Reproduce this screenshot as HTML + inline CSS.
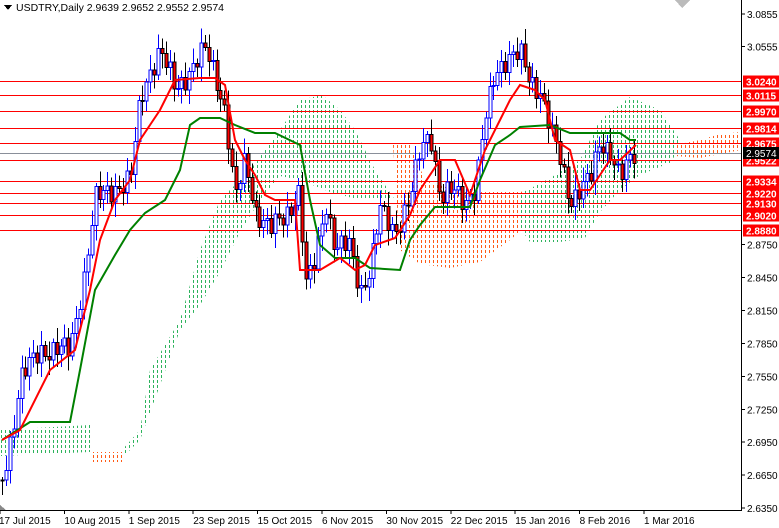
<!DOCTYPE html>
<html><head><meta charset="utf-8"><style>
html,body{margin:0;padding:0;background:#fff;width:779px;height:528px;overflow:hidden}
svg{display:block;font-family:"Liberation Sans",sans-serif}
</style></head><body>
<svg id="s" width="779" height="528" xmlns="http://www.w3.org/2000/svg" shape-rendering="crispEdges">
<defs id="defs"></defs>
<rect width="779" height="528" fill="#fff"/>
<g id="clouds"></g>
<g id="hl" stroke="#ff0000" stroke-width="1"></g>
<line x1="0" y1="153.5" x2="741" y2="153.5" stroke="#8a8f99" stroke-width="1"/>
<g id="cd"></g>
<polyline id="kj" fill="none" stroke="#008000" stroke-width="2" shape-rendering="auto"/>
<polyline id="tk" fill="none" stroke="#ff0000" stroke-width="2" shape-rendering="auto"/>
<rect x="742" y="0" width="37" height="528" fill="#fff"/>
<rect x="0" y="511" width="741" height="17" fill="#fff"/>
<line x1="741.5" y1="0" x2="741.5" y2="511" stroke="#000"/>
<line x1="0" y1="510.5" x2="742" y2="510.5" stroke="#000"/>
<g id="ax" font-size="10" fill="#000"></g>
<g id="lb"></g>
<g id="dt" font-size="10" fill="#000"></g>
<polygon points="4,5 12,5 8,10" fill="#000"/>
<text x="16" y="11" font-size="10.5" fill="#000">USDTRY,Daily  2.9639 2.9652 2.9552 2.9574</text>
<polygon points="0,505 6,510 0,510" fill="#888"/>
<polygon points="675,0 690,0 682,8" fill="#bbb"/>
</svg>
<script>
var N="http://www.w3.org/2000/svg";
function el(p,t,a,txt){var e=document.createElementNS(N,t);for(var k in a)e.setAttribute(k,a[k]);if(txt)e.textContent=txt;document.getElementById(p).appendChild(e);return e;}
function Y(p){return 508-(p-2.635)*1097;}
var clouds=[
["#2db35c","0,430 90,425 90,452 0,456"],
["#ff5a14","90,452 122,452 122,462 90,462"],
["#2db35c","122,450 140,430 150,370 180,320 200,250 220,200 250,170 280,130 300,100 322,95 340,110 355,130 375,170 395,200 360,200 330,192 300,180 280,176 260,200 240,232 220,272 200,305 180,330 160,385 140,440 125,455"],
["#ff5a14","393,145 410,145 425,180 460,192 490,192 520,192 540,188 540,215 510,240 480,262 450,268 420,264 400,250"],
["#2db35c","518,195 550,178 580,160 600,120 630,97 660,110 680,140 672,162 640,175 620,190 600,212 585,238 560,242 530,242 518,225"],
["#ff5a14","675,145 700,140 720,134 741,132 741,150 700,158 675,156"]];
clouds.forEach(function(c,i){
 var cp=el("defs","clipPath",{id:"c"+i});var pg=document.createElementNS(N,"polygon");pg.setAttribute("points",c[1]);cp.appendChild(pg);
 var g=el("clouds","g",{"clip-path":"url(#c"+i+")",stroke:c[0],"stroke-width":1,"stroke-dasharray":"3 2"});
 for(var x=1.5;x<742;x+=4){var l=document.createElementNS(N,"line");l.setAttribute("x1",x);l.setAttribute("x2",x);l.setAttribute("y1",0);l.setAttribute("y2",510);g.appendChild(l);}
});
var hl=[3.0240,3.0115,2.9970,2.9814,2.9675,2.9522,2.9334,2.9220,2.9130,2.9020,2.8880];
hl.forEach(function(p){var y=Math.round(Y(p))+0.5;el("hl","line",{x1:0,y1:y,x2:741,y2:y});
 el("lb","rect",{x:743,y:y-6,width:36,height:12,fill:"#ff0000"});
 el("lb","text",{x:746,y:y+4,"font-size":"10",fill:"#fff","font-weight":"bold"},p.toFixed(4));});
[3.0855,3.0555,2.8750,2.8450,2.8150,2.7850,2.7550,2.7250,2.6950,2.6650,2.6350].forEach(function(p){
 var y=Y(p);el("ax","line",{x1:741,y1:y,x2:745,y2:y,stroke:"#000"});el("ax","text",{x:747,y:y+4},p.toFixed(4));});
el("lb","rect",{x:743,y:147,width:36,height:12,fill:"#000"});
el("lb","text",{x:746,y:157,"font-size":"10",fill:"#fff"},"2.9574");
var d=["17 Jul 2015","10 Aug 2015","1 Sep 2015","23 Sep 2015","15 Oct 2015","6 Nov 2015","30 Nov 2015","22 Dec 2015","15 Jan 2016","8 Feb 2016","1 Mar 2016"];
d.forEach(function(s,i){var x=i*64.4;el("dt","line",{x1:x,y1:510,x2:x,y2:514,stroke:"#000"});el("dt","text",{x:x+(i?0:-1),y:524},s);});
var kp=[[2,480],[12,430],[20,380],[40,350],[70,350],[85,270],[95,200],[110,190],[130,180],[140,100],[150,70],[160,50],[175,90],[190,70],[205,50],[215,75],[225,110],[235,200],[245,160],[255,210],[270,230],[285,215],[300,190],[305,290],[315,260],[325,200],[335,250],[350,245],[360,290],[370,270],[380,210],[395,230],[410,200],[420,150],[430,130],[440,200],[455,190],[465,200],[475,190],[485,120],[495,70],[505,60],[520,55],[530,80],[540,90],[550,130],[560,160],[570,200],[580,190],[590,180],[600,140],[610,150],[620,180],[630,160],[636,150]];
function itp(x){for(var i=1;i<kp.length;i++){if(x<=kp[i][0]){var a=kp[i-1],b=kp[i];return a[1]+(b[1]-a[1])*(x-a[0])/(b[0]-a[0]);}}return kp[kp.length-1][1];}
var prev=itp(2);
for(var i=0;i<163;i++){var x=2+i*3.9;if(x>637)break;
 var c=itp(x)+Math.sin(i*2.3)*9+Math.sin(i*0.7)*5;var o=prev;prev=c;
 var hi=Math.min(o,c)-3-Math.abs(Math.sin(i*1.7))*12, lo=Math.max(o,c)+3+Math.abs(Math.cos(i*1.3))*12;
 var bull=c<o;var cx=Math.round(x)+0.5;
 el("cd","line",{x1:cx,y1:hi,x2:cx,y2:lo,stroke:bull?"#0000ff":"#000"});
 var t=Math.min(o,c),h=Math.max(Math.abs(o-c),1);
 el("cd","rect",{x:cx-1.5,y:t,width:3,height:h,fill:bull?"#fff":"#ff0000",stroke:bull?"#0000ff":"#000","stroke-width":1});
}
document.getElementById("tk").setAttribute("points","2,440 20,430 50,370 75,350 90,290 100,240 115,200 130,180 140,140 150,125 160,110 175,80 200,78 215,78 225,85 235,140 245,160 255,175 265,195 275,200 295,200 300,270 320,270 340,258 355,270 365,265 375,245 395,238 410,215 420,190 440,160 455,160 470,195 485,150 500,120 510,100 520,85 535,90 545,100 555,140 570,150 580,190 590,190 600,175 610,160 620,160 636,145");
document.getElementById("kj").setAttribute("points","2,440 30,422 70,422 80,370 95,290 115,255 130,230 145,213 165,200 180,170 190,125 200,118 220,118 235,125 255,133 275,133 300,145 310,200 320,245 335,258 355,258 370,268 400,270 410,240 420,225 435,207 470,207 480,180 495,145 510,135 520,127 550,125 570,133 620,133 630,140 636,140");
</script>
</body></html>
